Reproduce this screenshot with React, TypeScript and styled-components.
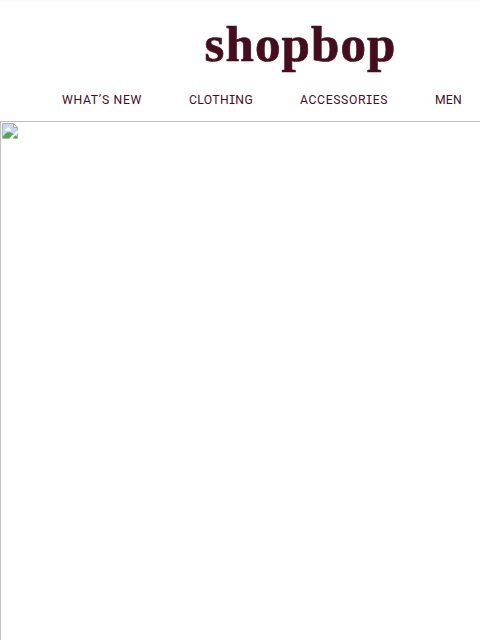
import React from "react";
import styled, { createGlobalStyle } from "styled-components";

const GlobalStyle = createGlobalStyle`
  * { box-sizing: border-box; }
  html, body { margin: 0; background: #fff; overflow: hidden; }
`;

const Page = styled.div`
  display: flex;
  flex-direction: column;
  width: 100%;
  height: 100vh;
  overflow: hidden;
  border-top: 1px solid #f5f5f5;
`;

const Header = styled.header`
  height: 120px;
  flex: none;
  display: flex;
  flex-direction: column;
`;

const Wordmark = styled.a`
  display: block;
  height: 84px;
  padding: 14px 0 0 204.5px;
  font: bold 51px/59px "Liberation Serif", serif;
  letter-spacing: 1.1px;
  color: #450d1e;
  -webkit-text-stroke: 0.7px #450d1e;
  white-space: nowrap;
`;

const Nav = styled.nav`
  display: flex;
  gap: 47px;
  padding-left: 62px;
  line-height: 30px;
`;

const NavItem = styled.a<{ $width: number; $tracking: number }>`
  flex: none;
  width: ${(p) => p.$width}px;
  height: 30px;
  font-family: Roboto, "Liberation Sans", sans-serif;
  font-size: 12.2px;
  letter-spacing: ${(p) => p.$tracking}px;
  color: #450d1e;
  white-space: nowrap;
`;

/* Slab-serif capital I, set from the monospaced face */
const SlabI = styled.span`
  margin: 0 -0.6px;
  font-family: "DejaVu Sans Mono", monospace;
  font-size: 12px;
  line-height: 1;
`;

const Banner = styled.div`
  flex: 1;
  padding: 1px;
  border-top: 1px solid #c0c0c0;
  border-left: 1px solid #c0c0c0;
`;

const Icon = styled.svg`
  display: block;
`;

const links = [
  { label: "WHAT’S NEW", width: 80, tracking: 0.68 },
  { label: "CLOTHING", width: 64, tracking: 0.33 },
  { label: "ACCESSORIES", width: 88, tracking: 0.62 },
  { label: "MEN", width: 27, tracking: 0.2 },
];

const renderLabel = (label: string) =>
  label.split("").map((ch, i) => (ch === "I" ? <SlabI key={i}>I</SlabI> : ch));

const MissingImage = () => (
  <Icon width="16" height="16" viewBox="0 0 16 16">
    <path d="M0.5 15.5V0.5H11.5L15.5 4.5V15.5Z" fill="#fff" stroke="#b0b0b0" />
    <path d="M1 1H11V5H15V15H1Z" fill="#c5d8f7" />
    <path d="M3 7.5Q3 5.8 4.5 5.8Q5 4 6.8 4.4Q8 4.8 8 6Q9.3 6.2 9.3 7.5Z" fill="#fff" />
    <path d="M1 15V13.5Q5 8 8 9.3Q10.5 10 15 13.5V15Z" fill="#4fae43" />
    <path d="M11.5 0.5V4.5H15.5Z" fill="#f3f3f3" stroke="#a8a8a8" />
    <path d="M16 7V9.5L10.2 16H7L10 12.3L12 11.2Z" fill="#fff" />
  </Icon>
);

export default function App() {
  return (
    <Page>
      <GlobalStyle />
      <Header>
        <Wordmark>shopbop</Wordmark>
        <Nav>
          {links.map((l) => (
            <NavItem key={l.label} $width={l.width} $tracking={l.tracking}>
              {renderLabel(l.label)}
            </NavItem>
          ))}
        </Nav>
      </Header>
      <Banner>
        <MissingImage />
      </Banner>
    </Page>
  );
}
